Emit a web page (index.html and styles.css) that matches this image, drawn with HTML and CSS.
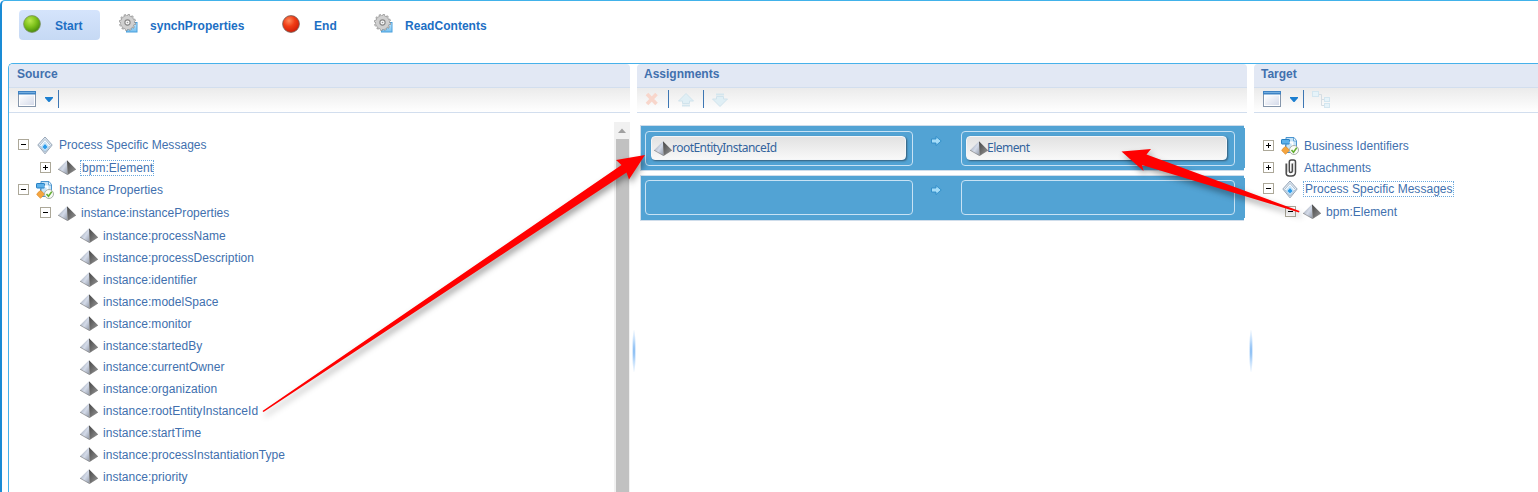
FILE: index.html
```html
<!DOCTYPE html>
<html lang="en">
<head>
<meta charset="utf-8">
<title>Data Assignments</title>
<link rel="stylesheet" href="styles.css">
</head>
<body>
<svg class="defs" width="0" height="0" aria-hidden="true">
  <defs>
    <linearGradient id="faceL" x1="0" y1="0" x2="1" y2="1"><stop offset="0" stop-color="#8d949e"/><stop offset=".55" stop-color="#d4dbe9"/><stop offset="1" stop-color="#8f97a6"/></linearGradient>
    <linearGradient id="faceR" x1="0" y1="0" x2="1" y2="1"><stop offset="0" stop-color="#454545"/><stop offset="1" stop-color="#999"/></linearGradient>
    <radialGradient id="green" cx=".38" cy=".3" r=".7"><stop offset="0" stop-color="#b9e84e"/><stop offset=".55" stop-color="#7cc01a"/><stop offset="1" stop-color="#4a8e0c"/></radialGradient>
    <radialGradient id="red" cx=".38" cy=".3" r=".7"><stop offset="0" stop-color="#ff8a5c"/><stop offset=".5" stop-color="#f03c14"/><stop offset="1" stop-color="#d01e08"/></radialGradient>
    <linearGradient id="pane" x1="0" y1="0" x2="1" y2="1"><stop offset="0" stop-color="#fff"/><stop offset="1" stop-color="#d5dbea"/></linearGradient>
    <linearGradient id="sky" x1="0" y1="0" x2="0" y2="1"><stop offset="0" stop-color="#c8e8fd"/><stop offset="1" stop-color="#74bff0"/></linearGradient>
    <symbol id="pyramid" viewBox="0 0 18 15">
      <path d="M9 .2 0 9.2 9.500 14.800z" fill="url(#faceL)"/>
      <path d="M9 .2 18 9.200 9.500 14.800z" fill="url(#faceR)"/>
      <path d="M0 9.200 9.500 14.600 18 9.200" fill="none" stroke="#777" stroke-width=".6"/>
    </symbol>
    <symbol id="gear" viewBox="0 0 19 19">
      <rect x="7.500" y="8.500" width="10.500" height="9.500" fill="url(#sky)" stroke="#4ba0dc"/>
      <circle cx="8.500" cy="8.500" r="7.300" fill="none" stroke="#888" stroke-width="2.300" stroke-dasharray="2.1 1.722"/>
      <circle cx="8.500" cy="8.500" r="5" fill="none" stroke="#8c8c8c" stroke-width="4.600"/>
      <circle cx="8.500" cy="8.500" r="7.200" fill="none" stroke="#d4d4d4" stroke-width="1.300" stroke-dasharray="1.3 2.47" stroke-dashoffset="-.4"/>
      <circle cx="8.500" cy="8.500" r="4.700" fill="none" stroke="#d0d0d0" stroke-width="4"/>
      <circle cx="8.500" cy="8.500" r="2.600" fill="#f6f6f6" stroke="#888" stroke-width="1.100"/>
      <circle cx="8.500" cy="8.500" r=".8" fill="#999"/>
    </symbol>
    <symbol id="window" viewBox="0 0 18 16">
      <rect x=".5" y=".5" width="17" height="15" fill="#fff" stroke="#8596ab"/>
      <rect x="0" y="0" width="18" height="3.500" fill="#3f83c4"/>
      <rect x="1" y="1" width="16" height="1" fill="#75afe0"/>
      <rect x="2" y="4.500" width="14" height="9.500" fill="url(#pane)"/>
    </symbol>
    <symbol id="message" viewBox="0 0 16 19">
      <path d="M8 1 15.200 9 8 17.800 .8 9z" fill="#e4ecf4" stroke="#93a3b5"/>
      <path d="M8 3.400 13.400 9.600 8 16 2.600 9.600z" fill="#f6fbff" stroke="#a6b8c9" stroke-width=".9"/>
      <path d="M8 6.200 11.800 10.800 8 15 4.200 10.800z" fill="#d9eefd" stroke="#a3cbe9" stroke-width=".7"/>
      <path d="M8 8 10.600 10.900 8 13.600 5.400 10.900z" fill="#2b9bea"/>
    </symbol>
    <symbol id="props" viewBox="0 0 18 18">
      <path d="M5 .5H13L15.500 3.500V15.500H5z" fill="#c6e4f8" stroke="#4c95cf"/>
      <path d="M12.500 1v3h3" fill="#fff" stroke="#4c95cf" stroke-width=".8"/>
      <rect x=".5" y="2.500" width="8" height="4.500" rx=".6" fill="#5db1ea" stroke="#257fc3"/>
      <path d="M8.500 5.500h3v5" fill="none" stroke="#fff" stroke-width="1.800"/>
      <path d="M4.500 7.500v3" stroke="#5a8eb8"/>
      <path d="M4.500 9.500 7 11.500 8.300 13.500 4.500 17.300 .7 13.500 2 11.500z" fill="#f5a53f" stroke="#dd8a25" stroke-width=".7"/>
      <circle cx="13" cy="13" r="4.500" fill="#fafdf8" stroke="#a0a7a0" stroke-width=".9"/>
      <path d="M10.500 13 12.500 15.200 15.800 10.600" fill="none" stroke="#62ad2e" stroke-width="1.600"/>
    </symbol>
    <symbol id="clip" viewBox="0 0 12 18">
      <path d="M1.200 4.500V14.300Q1.200 17 4.200 17H6.500Q10.500 17 10.500 13V3Q10.500 1 8.500 1H6.300Q4.300 1 4.300 3V12Q4.300 13.500 5.700 13.500Q7.300 13.500 7.300 12V4.500" fill="none" stroke="#4a4a4a" stroke-width="1.500"/>
      <path d="M2.600 4.500V13.500M9 3.500V13" stroke="#bbb" stroke-width=".8"/>
    </symbol>
    <symbol id="minus" viewBox="0 0 11 11">
      <rect x=".5" y=".5" width="10" height="10" fill="#fff" stroke="#aca899"/>
      <path d="M3 5.500h5" stroke="#000"/>
    </symbol>
    <symbol id="plus" viewBox="0 0 11 11">
      <rect x=".5" y=".5" width="10" height="10" fill="#fff" stroke="#aca899"/>
      <path d="M3 5.500h5M5.500 3v5" stroke="#000"/>
    </symbol>
    <symbol id="go" viewBox="0 0 11 10">
      <path d="M.5 3H5V.5L10.200 5 5 9.500V7H.5z" fill="#a4dcf8" stroke="#2d8bc7" stroke-width=".9"/>
    </symbol>
    <symbol id="caret" viewBox="0 0 8 5"><path d="M0 0H8V1L4.500 5H3.500L0 1z" fill="#1c7fd0"/></symbol>
    <symbol id="up" viewBox="0 0 18 14">
      <path d="M9 .5 16.500 8H12.500V10.500H5.500V8H1.500z" fill="#e0eff5" stroke="#d0e3ec"/>
      <path d="M5 12.500h8" stroke="#d4e6ee" stroke-width="2"/>
    </symbol>
  </defs>
</svg>

<div class="frame">
  <nav class="steps">
    <a class="step active"><svg class="ball"><circle cx="9" cy="9" r="8.400" fill="url(#green)" stroke="#7b8f62" stroke-width=".8"/></svg><span>Start</span></a>
    <a class="step s2"><svg class="gear"><use href="#gear"/></svg><span>synchProperties</span></a>
    <a class="step s3"><svg class="ball"><circle cx="9" cy="9" r="8.400" fill="url(#red)" stroke="#6e6460" stroke-width=".8"/></svg><span>End</span></a>
    <a class="step s4"><svg class="gear"><use href="#gear"/></svg><span>ReadContents</span></a>
  </nav>

  <main class="panels">
    <section class="panel source">
      <h2>Source</h2>
      <div class="toolbar"><svg class="window"><use href="#window"/></svg><svg class="caret"><use href="#caret"/></svg><i class="sep"></i></div>
      <div class="body">
        <ul class="tree">
          <li class="row"><svg class="tog"><use href="#minus"/></svg><svg class="msg"><use href="#message"/></svg><span>Process Specific Messages</span></li>
          <li class="row l2 t24"><svg class="tog"><use href="#plus"/></svg><svg class="pyr"><use href="#pyramid"/></svg><span class="sel">bpm:Element</span></li>
          <li class="row t21"><svg class="tog"><use href="#minus"/></svg><svg class="prop"><use href="#props"/></svg><span>Instance Properties</span></li>
          <li class="row l2 t25 tight"><svg class="tog"><use href="#minus"/></svg><svg class="pyr"><use href="#pyramid"/></svg><span>instance:instanceProperties</span></li>
          <li class="row l3"><svg class="pyr"><use href="#pyramid"/></svg><span>instance:processName</span></li>
          <li class="row l3"><svg class="pyr"><use href="#pyramid"/></svg><span>instance:processDescription</span></li>
          <li class="row l3"><svg class="pyr"><use href="#pyramid"/></svg><span>instance:identifier</span></li>
          <li class="row l3"><svg class="pyr"><use href="#pyramid"/></svg><span>instance:modelSpace</span></li>
          <li class="row l3"><svg class="pyr"><use href="#pyramid"/></svg><span>instance:monitor</span></li>
          <li class="row l3"><svg class="pyr"><use href="#pyramid"/></svg><span>instance:startedBy</span></li>
          <li class="row l3 short"><svg class="pyr"><use href="#pyramid"/></svg><span>instance:currentOwner</span></li>
          <li class="row l3"><svg class="pyr"><use href="#pyramid"/></svg><span>instance:organization</span></li>
          <li class="row l3"><svg class="pyr"><use href="#pyramid"/></svg><span>instance:rootEntityInstanceId</span></li>
          <li class="row l3"><svg class="pyr"><use href="#pyramid"/></svg><span>instance:startTime</span></li>
          <li class="row l3"><svg class="pyr"><use href="#pyramid"/></svg><span>instance:processInstantiationType</span></li>
          <li class="row l3"><svg class="pyr"><use href="#pyramid"/></svg><span>instance:priority</span></li>
        </ul>
        <div class="scroll"><svg width="15" height="17"><path d="M4 11 8 6.500 12 11z" fill="#a0a0a0"/></svg><div class="thumb"></div></div>
      </div>
    </section>

    <div class="split"><i></i></div>

    <section class="panel assign">
      <h2>Assignments</h2>
      <div class="toolbar">
        <svg class="del"><path d="M2 2 11.500 12M11.500 2 2 12" stroke="#f8d6cb" stroke-width="3.600"/></svg>
        <i class="sep"></i>
        <svg class="arr"><use href="#up"/></svg>
        <i class="sep"></i>
        <svg class="arr down"><use href="#up"/></svg>
      </div>
      <div class="maps">
        <div class="map">
          <div class="slot from"><div class="pill"><svg class="pyr"><use href="#pyramid"/></svg><span>rootEntityInstanceId</span></div></div>
          <svg class="go"><use href="#go"/></svg>
          <div class="slot to"><div class="pill"><svg class="pyr"><use href="#pyramid"/></svg><span>Element</span></div></div>
        </div>
        <div class="map empty">
          <div class="slot from"></div>
          <svg class="go"><use href="#go"/></svg>
          <div class="slot to"></div>
        </div>
      </div>
    </section>

    <div class="split"><i></i></div>

    <section class="panel target">
      <h2>Target</h2>
      <div class="toolbar"><svg class="window"><use href="#window"/></svg><svg class="caret"><use href="#caret"/></svg><i class="sep"></i>
        <svg class="hier"><path d="M7 3.500H9.500V14.500H12M9.500 8.500H12" fill="none" stroke="#d5dde3"/><g fill="#e6f3f9" stroke="#d3e6f0"><rect x=".5" y=".5" width="6" height="5"/><rect x="12.500" y="6.500" width="5" height="4"/><rect x="12.500" y="12.500" width="5" height="4"/></g></svg>
      </div>
      <ul class="tree">
        <li class="row"><svg class="tog"><use href="#plus"/></svg><svg class="prop"><use href="#props"/></svg><span>Business Identifiers</span></li>
        <li class="row"><svg class="tog"><use href="#plus"/></svg><svg class="clip"><use href="#clip"/></svg><span>Attachments</span></li>
        <li class="row t20"><svg class="tog"><use href="#minus"/></svg><svg class="msg"><use href="#message"/></svg><span class="sel">Process Specific Messages</span></li>
        <li class="row l2 t25"><svg class="tog"><use href="#minus"/></svg><svg class="pyr"><use href="#pyramid"/></svg><span>bpm:Element</span></li>
      </ul>
    </section>
  </main>
</div>

<svg class="pointers" viewBox="0 0 1538 492">
  <path d="M262.500 411 621.500 165 616 160 645 155 629 179.500 626.500 172.500 263.500 412z"/>
  <path d="M1299.500 211 1146.500 154.500 1151 149 1121.500 151.500 1143.500 171 1142 165 1299 212.500z"/>
</svg>
</body>
</html>
```
FILE: styles.css
```css
* { box-sizing: border-box; }
body { margin: 0; height: 492px; overflow: hidden; background: #fff; font: 12px "Liberation Sans", Arial, sans-serif; color: #4170ae; }
svg { display: block; flex: none; overflow: visible; }
.defs { position: absolute; }
.frame { height: 500px; width: 1546px; border: 1px solid #41b2ea; border-left: 2px solid #1a8bd5; border-radius: 5px; padding: 9px 0 0 6px; }

.steps { display: flex; height: 53px; padding-left: 11px; align-items: flex-start; color: #1d6fc4; font-weight: bold; }
.step { display: flex; align-items: center; height: 30px; letter-spacing: .03px; }
.step svg { margin-top: -3px; }
.step span { margin-top: 1px; }
.step.active { width: 81px; padding-left: 4px; border-radius: 4px; background: linear-gradient(#d5e4fc, #c6d9f4); }
.ball { width: 18px; height: 18px; margin-right: 14px; }
.gear { width: 19px; height: 19px; margin-right: 12px; }
.s2 { width: 163px; padding-left: 19px; }
.s3 { width: 91px; padding-left: 19px; }
.s4 { padding-left: 20px; }

.panels { display: flex; height: 440px; border: solid #46b1ea; border-width: 1px 0 0 1px; border-top-left-radius: 5px; }
.panel { flex: none; }
.panel h2 { margin: 0; height: 24px; padding: 0 7px; font-size: 12px; line-height: 20px; background: #e2e8f4; border-bottom: 1px solid #d2deee; border-radius: 4px 4px 0 0; }
.source h2 { padding-left: 8px; }
.toolbar { display: flex; align-items: center; height: 25px; padding-left: 9px; background: linear-gradient(#ebebeb, #fff); border-bottom: 1px solid #d2deee; }
.source { width: 621px; }
.assign { width: 610px; }
.target { width: 292px; }
.window { width: 18px; height: 16px; margin-top: -2px; }
.caret { width: 8px; height: 5px; margin: -2px 5px 0 9px; }
.sep { width: 1px; height: 18px; background: #3d76b3; margin-top: -3px; }
.del { width: 14px; height: 14px; margin: -2px 10px 0 8px; }
.assign .toolbar { padding-left: 0; }
.assign .sep { margin-left: -1px; }
.arr { width: 18px; height: 14px; margin: -1px 9px 0 8px; }
.down { margin-left: 7px; transform: scaleY(-1); }
.hier { width: 18px; height: 17px; margin-left: 8px; margin-top: -2px; }

.body { display: flex; height: 390px; }
.tree { list-style: none; flex: 1; margin: 0; padding: 21px 0 0 9px; letter-spacing: .035px; }
.row { display: flex; align-items: center; height: 22px; white-space: nowrap; }
.t25 { height: 25px; }
.t24 { height: 23.500px; }
.t21 { height: 21px; }
.t20 { height: 20px; }
.tight { margin-bottom: -1px; }
.l2 { padding-left: 22px; }
.l3 { padding-left: 61px; height: 22px; }
.l3.short { height: 21px; }
.tog { width: 11px; height: 11px; margin-right: 8px; margin-top: -1px; }
.msg { width: 16px; height: 19px; margin-right: 6px; }
.pyr { width: 18px; height: 15px; margin-right: 6px; margin-top: 0; }
.l2 .pyr { margin-right: 5px; margin-left: -1px; }
.l3 .pyr { margin-left: 1px; margin-right: 5px; }
.prop { width: 18px; height: 18px; margin: 0 5px 0 -1px; }
.clip { width: 12px; height: 18px; margin: 0 7px 0 3px; }
.sel { border: 1px dotted #6ca9dd; line-height: 14px; padding: 0 0 0 1px; margin-left: -1px; }
.target .tree { padding: 22px 0 0 9px; }

.scroll { width: 16px; margin-top: 9px; background: #f1f1f1; display: flex; flex-direction: column; }
.thumb { flex: 1; margin: 0 1px 0 2px; background: #c1c1c1; }
.split { flex: none; width: 7px; padding: 266px 0 0 2px; }
.split i { display: block; width: 4px; height: 42px; background: radial-gradient(ellipse, #6aabef 0, #c2defb 40%, #fff 75%); }

.maps { padding: 12px 3px 0 3px; display: flex; flex-direction: column; gap: 4px; }
.map { position: relative; display: flex; align-items: flex-start; height: 46px; padding: 5px 0 0 4px; background: #52a3d4; border: 1px solid #cfddeb; border-right: 0; }
.map::after { content: ""; position: absolute; right: -1px; top: 2px; bottom: 2px; width: 1px; background: #52a3d4; }
.map.empty { padding-top: 4px; }
.slot { height: 35px; border: 1px solid #c8e2f4; border-radius: 4px; padding: 4px 6px 4px 5px; }
.from { width: 268px; }
.to { width: 274px; padding-left: 4px; padding-right: 7px; }
.go { width: 11px; height: 10px; margin: 5px 19px 0 18px; }
.pill { display: flex; align-items: center; height: 24px; padding-left: 2px; border-radius: 4px; background: linear-gradient(#e2e2e2, #f8f8f8); border: 1px solid #f4f6f8; box-shadow: 1px 1px 2px #345c77; color: #34649d; font: 12px "Noto Sans", sans-serif; letter-spacing: -.53px; }
.to .pill { padding-left: 3px; }
.pill .pyr { margin-right: 0; }
.to .pyr { margin-right: -1px; }
.pill span { margin-top: -1px; }

.pointers { position: absolute; left: 0; top: 0; width: 1538px; height: 492px; fill: #f00; filter: drop-shadow(2px 4px 3px rgba(0,0,0,.38)); pointer-events: none; }
```
